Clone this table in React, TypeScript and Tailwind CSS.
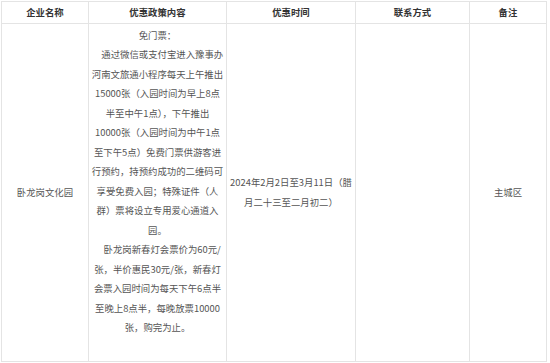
import React from "react";

const lines: { t: string; indent?: boolean }[] = [
  { t: "免门票：" },
  { t: "通过微信或支付宝进入豫事办", indent: true },
  { t: "河南文旅通小程序每天上午推出" },
  { t: "15000张（入园时间为早上8点" },
  { t: "半至中午1点），下午推出" },
  { t: "10000张（入园时间为中午1点" },
  { t: "至下午5点）免费门票供游客进" },
  { t: "行预约，持预约成功的二维码可" },
  { t: "享受免费入园；特殊证件（人" },
  { t: "群）票将设立专用爱心通道入" },
  { t: "园。" },
  { t: "卧龙岗新春灯会票价为60元/", indent: true },
  { t: "张，半价惠民30元/张，新春灯" },
  { t: "会票入园时间为每天下午6点半" },
  { t: "至晚上8点半，每晚放票10000" },
  { t: "张，购完为止。" },
];

const font = { fontFamily: '"Noto Sans CJK SC", "Microsoft YaHei", sans-serif' };

export default function App() {
  const headers = ["企业名称", "优惠政策内容", "优惠时间", "联系方式", "备注"];
  return (
    <div className="w-[550px] h-[363px] bg-white pt-[1px] pl-[1px]" style={font}>
      <div className="grid grid-cols-[87px_138px_129px_114px_77px] w-[546px] border-l border-t border-[#e4e4e4] text-[9.4px] text-[#555]">
        {headers.map((h) => (
          <div
            key={h}
            className="h-[22px] border-r border-b border-[#e4e4e4] flex items-center justify-center font-bold text-[#333]"
          >
            {h}
          </div>
        ))}
        <div className="h-[338px] border-r border-b border-[#e4e4e4] flex items-center justify-center">
          卧龙岗文化园
        </div>
        <div className="h-[338px] border-r border-b border-[#e4e4e4] pt-[2px] flex flex-col items-center">
          {lines.map((l, i) => (
            <div key={i} className="h-[19.47px] leading-[19.47px] whitespace-nowrap text-center">
              {l.indent && <span className="inline-block w-[1em]" />}
              {l.t}
            </div>
          ))}
        </div>
        <div className="h-[338px] border-r border-b border-[#e4e4e4] flex flex-col items-center justify-center">
          <div className="h-[19.5px] leading-[19.5px] whitespace-nowrap">2024年2月2日至3月11日（腊</div>
          <div className="h-[19.5px] leading-[19.5px] whitespace-nowrap">月二十三至二月初二）</div>
        </div>
        <div className="h-[338px] border-r border-b border-[#e4e4e4]" />
        <div className="h-[338px] border-r border-b border-[#e4e4e4] flex items-center justify-center">
          主城区
        </div>
      </div>
    </div>
  );
}
